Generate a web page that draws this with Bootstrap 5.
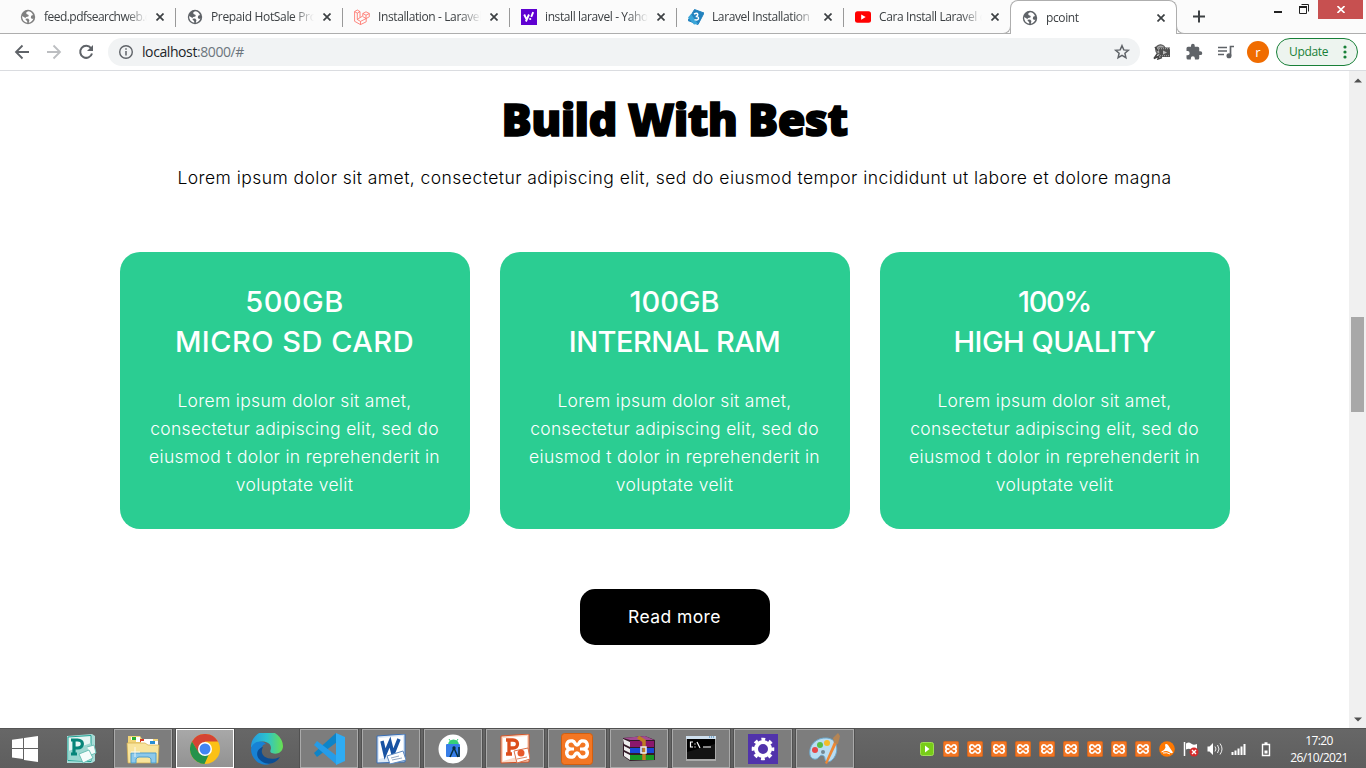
<!DOCTYPE html>
<html lang="en">
<head>
<meta charset="utf-8">
<title>pcoint</title>
<link rel="stylesheet" href="https://cdn.jsdelivr.net/npm/bootstrap@5.3.0/dist/css/bootstrap.min.css">
<style>
body{width:1366px;height:768px;overflow:hidden;font-family:"Open Sans","Noto Sans",sans-serif;font-size:12px;line-height:16px;color:#3c4043;background:#fff}
svg{display:block;flex:none}
.strip{height:34px;background:#fbfbfb;border-bottom:1px solid #aeaeae;padding-left:9px;flex:none}
.tab{width:167px;height:33px;padding:0 12px 0 11px;position:relative}
.tab:not(.on)::after{content:"";position:absolute;right:0;top:8px;width:1px;height:19px;background:#999}
.tab.last::after{display:none}
.tab .lbl{width:112px;margin-left:8px;margin-right:-3px;white-space:nowrap;letter-spacing:-.39px;-webkit-mask-image:linear-gradient(90deg,#000 82px,transparent 103px)}
.tab:nth-child(1) .lbl{letter-spacing:-.53px}
.tab:nth-child(2) .lbl{letter-spacing:-.35px}
.tab.on{height:34px;background:#fff;border:1px solid #aeaeae;border-bottom:0;border-radius:8px 8px 0 0;padding:0 11px;width:167px;margin-left:-1px;margin-right:1px}
.tab.on::before,.tab.on::after{content:"";position:absolute;bottom:0;width:8px;height:8px;border-bottom:1px solid #aeaeae;background:#fbfbfb}
.tab.on::before{left:-8px;border-right:1px solid #aeaeae;border-radius:0 0 8px 0}
.tab.on::after{right:-8px;border-left:1px solid #aeaeae;border-radius:0 0 0 8px}
.plus{margin:9px 0 0 14px}
.closewin{width:45px;height:19px;background:#c75050;margin:0 3px 0 0}
.bar{height:37px;border-bottom:1px solid #dadce0;flex:none;padding:0 8px 0 12px}
.omni{width:1032px;height:28px;background:#f1f3f4;border-radius:14px;margin-left:12px;padding:0 9px;font-size:14px}
.url{margin-left:7px;letter-spacing:-.41px}
.avatar{width:22px;height:22px;background:#f06c00;color:#fff;font-size:13px;margin-left:12px}
.upd{width:82px;height:28px;border:1px solid #188038;border-radius:14px;color:#188038;background:#edf4ef;padding:0 9px 0 12px;margin-left:7px;letter-spacing:-.35px}
.page{flex:1;min-height:0}
.site{width:1349px;font-family:Inter,"Liberation Sans",sans-serif;background:#fff}
.sbar{width:17px;background:#f0f0f0;padding:7px 0 6px}
.thumb{width:13px;height:95px;background:#a8a8a8;margin-top:234px}
.headline{font-family:"Noto Sans",Inter,sans-serif;font-weight:900;font-size:45px;line-height:56px;letter-spacing:-.7px;color:#000;-webkit-text-stroke:1.5px #000;padding-top:20px;margin:0}
.intro{font-weight:300;font-size:17.5px;line-height:28px;letter-spacing:.444px;color:#000;margin:17px 0 0}
.cards{width:1110px;gap:30px;margin:60px auto 0}
.feat{width:350px;height:277px;border-radius:20px;background:#2bcd92;color:#fff;padding-top:30px}
.feat h3{font-size:29px;line-height:40px;font-weight:500;margin:0 0 25px;white-space:nowrap}
.feat p{font-size:17.5px;line-height:28px;font-weight:300;letter-spacing:.31px;margin:0}
.wide{letter-spacing:.5px}.snug{letter-spacing:-.5px}.tight{letter-spacing:-1.3px}
.more{width:190px;height:56px;border-radius:15px;background:#000;color:#fff;margin-top:60px;font-size:17.5px;letter-spacing:.42px}
.task{height:40px;background:linear-gradient(#676767,#5e5e5e);flex:none;border-top:1px solid #555}
.start{width:26px;margin:0 14px 0 12px}
.tk{width:58px;height:39px;margin-right:4px;border:1px solid #aaa;background:#7d7d7d;outline:1px solid #515151}
.tk.cur{background:linear-gradient(#a8a8a8,#929292);border-color:#fff}
.tk.flat{background:none;border-color:transparent;outline:0}
.tray{margin-right:14px}
.tray>svg{margin-right:8px}
.clock{color:#fff;width:64px;line-height:17px;letter-spacing:-.6px;margin-right:15px}
</style>
</head>
<body class="d-flex flex-column">
<svg width="0" height="0" class="position-absolute">
<symbol id="globe" viewBox="0 0 16 16"><circle cx="8" cy="8" r="7.2" fill="currentColor"/><path d="M8 2.2 6.2 3.5l.3 1.6 2.2.8-.3 1.5-2.3.5-.8 1.3 2.8.4 1.3 1.5-.6 2.7c2-.5 4-2 4.6-4.2l-1.4.3-1.2-1.2.4-2 1.8-.8A5.8 5.8 0 0 0 8 2.2M2.2 7l3.200 2 .4 2 1.300 1 .2 1.700A5.800 5.800 0 0 1 2.200 7" fill="#fff"/></symbol>
<symbol id="x" viewBox="0 0 8 8"><path d="m.5.5 7 7m0-7-7 7" stroke="#3c4043" stroke-width="1.7"/></symbol>
<symbol id="xampp" viewBox="0 0 32 32"><rect x=".5" y=".5" width="31" height="31" rx="3" fill="#f37623" stroke="#d05f10"/><path d="M11.5 8C5 7 4 14 8.500 16 4 18 5 25 11.500 24c3-.500 2-4 4.500-4s1.500 3.500 4.500 4c6.500 1 7.500-6 3-8 4.500-2 3.500-9-3-8-3 .5-2 4-4.500 4s-1.500-3.500-4.500-4Z" fill="none" stroke="#fff" stroke-width="3.400"/><path d="M9 16h4m6 0h4" stroke="#fff" stroke-width="3.200"/></symbol>
</svg>

<!-- tab strip -->
<div class="strip d-flex align-items-start">
<div class="tab d-flex align-items-center"><svg width="16" height="16" style="color:#808080"><use href="#globe"/></svg><span class="lbl">feed.pdfsearchweb.c</span><svg class="ms-auto" width="8" height="8"><use href="#x"/></svg></div>
<div class="tab d-flex align-items-center"><svg width="16" height="16" style="color:#5f6368"><use href="#globe"/></svg><span class="lbl">Prepaid HotSale Pro</span><svg class="ms-auto" width="8" height="8"><use href="#x"/></svg></div>
<div class="tab d-flex align-items-center"><svg width="16" height="16" viewBox="0 0 16 16" fill="none" stroke="#ff6b61" stroke-width=".8"><path d="M.6 2.600 3.300 1 6 2.600v6L8.800 7V4.500L12 2.800l3.300 1.700v3.300L12.200 9.500v3.300L6.500 15.600.6 12.300zM.6 2.600l2.700 1.500L6 2.600M3.300 4.100v6.400M6 8.600l-2.700 1.900 3.200 1.900 5.700-2.900L8.800 7.600M8.800 4.500 12 6.200l3.300-1.700M12 6.200v3.300M6.500 12.400v3.200"/></svg><span class="lbl">Installation - Laravel</span><svg class="ms-auto" width="8" height="8"><use href="#x"/></svg></div>
<div class="tab d-flex align-items-center"><svg width="16" height="16" viewBox="0 0 16 16"><path fill="#5f01d1" d="M0 0h16v16H0z"/><path d="m3.200 5.500 2.100 4.400M8 5.500 4.900 12.500M12.200 3.200 10.200 7.800" stroke="#fff" stroke-width="1.900"/><circle cx="9.200" cy="10" r="1.100" fill="#fff"/></svg><span class="lbl">install laravel - Yaho</span><svg class="ms-auto" width="8" height="8"><use href="#x"/></svg></div>
<div class="tab d-flex align-items-center"><svg width="16" height="16" viewBox="0 0 16 16"><path d="M6.500.5 16 4 10 15.500 0 11.500z" fill="#2382be" stroke="#2382be" stroke-linejoin="round"/><path d="m0 8.500 6 7 4-.500L3 5z" fill="#3aa5d8"/><path d="M6 5.200q3-2 3.800 0Q10 7 7.800 7.700q3-.3 2.700 1.800-.7 2.300-4 1.200" fill="none" stroke="#fff" stroke-width="1.400"/></svg><span class="lbl">Laravel Installation</span><svg class="ms-auto" width="8" height="8"><use href="#x"/></svg></div>
<div class="tab last d-flex align-items-center"><svg width="16" height="16" viewBox="0 0 16 16"><rect y="2.300" width="16" height="11.500" rx="2.500" fill="red"/><path d="m6.200 5.500 4.500 2.600-4.500 2.600z" fill="#fff"/></svg><span class="lbl">Cara Install Laravel d</span><svg class="ms-auto" width="8" height="8"><use href="#x"/></svg></div>
<div class="tab on d-flex align-items-center"><svg width="16" height="16" style="color:#5f6368"><use href="#globe"/></svg><span class="lbl">pcoint</span><svg class="ms-auto" width="8" height="8"><use href="#x"/></svg></div>
<svg class="plus" width="14" height="14" viewBox="0 0 14 14"><path d="M7 1.500v12M1 7.500h12" stroke="#3c4043" stroke-width="2"/></svg>
<svg class="ms-auto" width="44" height="19" viewBox="0 0 44 19" fill="none" stroke="#222"><path d="M0 12h8" stroke-width="2"/><path d="M25.500 6.500h7v7h-7zM27.500 4.500h7v7"/><path d="M25 7h8" stroke-width="2"/></svg>
<div class="closewin d-flex align-items-center justify-content-center"><svg width="8" height="7" viewBox="0 0 8 7"><path d="m.5 0 7 7m0-7-7 7" stroke="#fff" stroke-width="1.600"/></svg></div>
</div>

<!-- toolbar -->
<div class="bar d-flex align-items-center">
<svg width="84" height="20" viewBox="0 0 84 20" fill="none" stroke-width="1.800"><path d="M17 10H4m6.500-6.500L4 10l6.500 6.500" stroke="#5f6368"/><path d="M35 10h13m-6.500-6.500L48 10l-6.500 6.500" stroke="#bcbec1"/><path d="M79 6.200A6 6 0 1 0 80 11.500" stroke="#5f6368" stroke-width="2"/><path d="M81 3v6h-6z" fill="#5f6368"/></svg>
<div class="omni d-flex align-items-center"><svg width="18" height="18" viewBox="0 0 18 18"><circle cx="9" cy="9" r="6.300" fill="none" stroke="#5f6368" stroke-width="1.400"/><path d="M9 8v4.500M9 5.300v1.500" stroke="#5f6368" stroke-width="1.500"/></svg><span class="url"><span class="text-dark">localhost</span><span class="text-secondary">:8000/#</span></span><svg class="ms-auto" width="18" height="18" viewBox="0 0 18 18"><path d="m9 2.700 1.800 4.200 4.500.4-3.400 3 1 4.400L9 12.400l-3.900 2.300 1-4.400-3.400-3 4.500-.4z" fill="none" stroke="#5f6368" stroke-width="1.500"/></svg></div>
<svg class="ms-auto" width="18" height="16" viewBox="0 0 18 16"><circle cx="7.500" cy="5.500" r="4.700" fill="#aaa" stroke="#555" stroke-width="1.300"/><path d="M5.500 3.500h11.500v9.500H7z" fill="#505050"/><path d="M6 4.700h11M7 11.700h10" stroke="#aaa" stroke-dasharray="1 1"/><path d="m10 6.500 4 2-4 2z" fill="#bbb"/><path d="M4.500 9.500 1 14.500l5-2.500-1 3 4-1.500M2 3l3 4" stroke="#444" stroke-width="1.500" fill="none"/></svg>
<svg style="margin-left:14px" width="18" height="18" viewBox="0 0 24 24"><path fill="#5f6368" d="M20.500 11H19V7a2 2 0 0 0-2-2h-4V3.500a2.500 2.500 0 0 0-5 0V5H4a2 2 0 0 0-2 2v3.800h1.500a2.700 2.700 0 0 1 0 5.400H2V20a2 2 0 0 0 2 2h3.800v-1.500a2.700 2.700 0 0 1 5.400 0V22H17a2 2 0 0 0 2-2v-4h1.500a2.500 2.500 0 0 0 0-5z"/></svg>
<svg style="margin-left:14px" width="18" height="16" viewBox="0 0 18 16" fill="none" stroke="#5f6368" stroke-width="1.700"><path d="M1 3.500h9M1 7h9M1 10.500h6M13.500 11.500v-9H17"/><circle cx="12" cy="11.700" r="1.700" fill="#5f6368"/></svg>
<div class="avatar rounded-circle d-flex align-items-center justify-content-center">r</div>
<div class="upd d-flex align-items-center"><span>Update</span><svg class="ms-auto" width="6" height="14" fill="#188038"><circle cx="3" cy="2" r="1.600"/><circle cx="3" cy="7" r="1.600"/><circle cx="3" cy="12" r="1.600"/></svg></div>
</div>

<!-- page -->
<div class="page d-flex">
<main class="site text-center">
<h2 class="headline">Build With Best</h2>
<p class="intro">Lorem ipsum dolor sit amet, consectetur adipiscing elit, sed do eiusmod tempor incididunt ut labore et dolore magna</p>
<div class="cards d-flex">
<div class="feat"><h3><span class="wide">500GB</span><br><span class="wide">MICRO SD CARD</span></h3><p>Lorem ipsum dolor sit amet,<br>consectetur adipiscing elit, sed do<br>eiusmod t dolor in reprehenderit in<br>voluptate velit</p></div>
<div class="feat"><h3>100GB<br><span class="snug">INTERNAL RAM</span></h3><p>Lorem ipsum dolor sit amet,<br>consectetur adipiscing elit, sed do<br>eiusmod t dolor in reprehenderit in<br>voluptate velit</p></div>
<div class="feat"><h3><span class="tight">100%</span><br><span class="snug">HIGH QUALITY</span></h3><p>Lorem ipsum dolor sit amet,<br>consectetur adipiscing elit, sed do<br>eiusmod t dolor in reprehenderit in<br>voluptate velit</p></div>
</div>
<button class="more border-0">Read more</button>
</main>
<div class="sbar d-flex flex-column align-items-center"><svg width="8" height="5"><path d="M0 4.500 4 .5l4 4z" fill="#505050"/></svg><div class="thumb"></div><svg class="mt-auto" width="8" height="5"><path d="M0 .5h8l-4 4z" fill="#505050"/></svg></div>
</div>

<!-- taskbar -->
<div class="task d-flex align-items-center">
<svg class="start" height="26" viewBox="0 0 26 26" fill="#fff"><path d="M0 3.700 11 2.200V12H0zM12 2l14-2v12H12zM0 13h11v10L0 21.500zM12 13h14v13l-14-2z"/></svg>
<div class="tk flat d-flex align-items-center justify-content-center"><svg width="32" height="32" viewBox="0 0 32 32"><path d="M2 3 27 1l3 2v25l-3 2H2z" fill="#a9dcd7"/><path d="M3 4 26 2.500v26L3 27.500z" fill="#e6f6f4" stroke="#20a395"/><path d="M3.500 18 26 10v18l-22.500-1z" fill="#9bd7d0"/><path d="M9 21V7h3.500c6.500 0 6.500 8 0 8H10M6 7h4M6 21h6" fill="none" stroke="#068579" stroke-width="3.200"/><path d="m14 21 10-4 4 8-10 5zM22 14l7-2 2 8-5 2" fill="#f4fcfb" stroke="#6cc0b6"/></svg></div>
<div class="tk d-flex align-items-center justify-content-center"><svg width="34" height="32" viewBox="0 0 34 32"><path d="M2 3h12l2 3h16v23H2z" fill="#f2d578"/><path d="M5 4h9v3H5z" fill="#fff"/><path d="M6 4h4v3H6z" fill="#2dac34"/><path d="M10 6h17v3H10z" fill="#fff"/><path d="M14 6h4v3h-4z" fill="#d63a22"/><path d="M15 8h17v4H15z" fill="#fff"/><path d="M24 8h5v3h-5z" fill="#288ed4"/><path d="M1 10h18l3 2h11l-1 18H2z" fill="#f8e49c" stroke="#d3ac4b" stroke-width=".7"/><path d="M5 30V20h25v10h-5v-4q-1-2-3-2h-9q-2 0-3 2v4z" fill="#8cc9ec" stroke="#4c9dcc"/><path d="M9 14v10M5 19h9" stroke="#fff" opacity=".8"/></svg></div>
<div class="tk cur d-flex align-items-center justify-content-center"><svg width="30" height="30" viewBox="0 0 30 30"><circle cx="15" cy="15" r="15" fill="#fbc116"/><path d="M2 7.500A15 15 0 0 1 28 7.500H15l-6.500 11.300z" fill="#d54434"/><path d="m2 7.500 7 11.500q5 4 10 1L14.500 30A15 15 0 0 1 2 7.500" fill="#25924b"/><circle cx="15" cy="15" r="7" fill="#fff"/><circle cx="15" cy="15" r="5.500" fill="#4285f4"/></svg></div>
<div class="tk flat d-flex align-items-center justify-content-center"><svg width="32" height="32" viewBox="0 0 32 32"><defs><linearGradient id="e1"><stop stop-color="#2499e0"/><stop offset=".5" stop-color="#2cc3cf"/><stop offset="1" stop-color="#69e14f"/></linearGradient></defs><path d="M0 15A16 16 0 0 1 32 13c0 7-7 9-11 7-3-1-1-3-1-5 0-8-15-9-20 0" fill="url(#e1)"/><path d="M0 16c1-7 10-10 15-5-6 0-8 13 4 20C9 34 0 26 0 16" fill="#1782d5"/><path d="M12 14c-5 9 6 15 17 10-5 8-15 9-21 2-4-5-1-11 4-12" fill="#0c4d94"/></svg></div>
<div class="tk d-flex align-items-center justify-content-center"><svg width="32" height="32" viewBox="0 0 32 32"><path d="M1 20 23 0l1 9L4 24z" fill="#0d84c8"/><path d="m1 12 3-4 20 15v9L1 12z" fill="#269ce8"/><path d="m23 0 9 4v24l-9 4z" fill="#2eacf4"/></svg></div>
<div class="tk d-flex align-items-center justify-content-center"><svg width="30" height="30" viewBox="0 0 30 30"><path d="M1 2 29 0v28L1 29z" fill="#dce9f7" stroke="#396fb7"/><path d="M3 4 27 2v17L3 25z" fill="#fff"/><path d="m6 7 3 13 5-12 3 12 6-15" fill="none" stroke="#1953a3" stroke-width="3.500"/><path d="m11 22 16-5 3 9-16 4z" fill="#fff" stroke="#608bc1"/><path d="m15 24 8-2m-7 4 10-2" stroke="#94a8c5"/></svg></div>
<div class="tk d-flex align-items-center justify-content-center"><svg width="30" height="30" viewBox="0 0 30 30"><circle cx="15" cy="15" r="14.500" fill="#fff"/><path d="M10 11a5.500 5.500 0 0 1 11 0z" fill="#35d078"/><path d="m11 5 2 3m7-3-2 3" stroke="#35d078"/><rect x="8" y="10" width="14" height="13" rx="1" fill="#377ee8"/><path d="m12 23 4-9 4 9" fill="none" stroke="#073042" stroke-width="1.500"/><circle cx="16" cy="14" r="1.700" fill="#073042"/><path d="M21 13v10" stroke="#073042" stroke-width="1.500"/></svg></div>
<div class="tk d-flex align-items-center justify-content-center"><svg width="30" height="30" viewBox="0 0 30 30"><path d="M1 2 29 0v28L1 29z" fill="#fbd9c7" stroke="#d45427"/><path d="M3 4 27 2v18L3 27z" fill="#fff"/><path d="M9 20V6h4c6 0 6 8 0 8h-3M6 6h4M6 20h6" fill="none" stroke="#dc4e1c" stroke-width="3.300"/><path d="m14 17 14-3 2 11-13 4z" fill="#fff" stroke="#db714a"/><circle cx="21" cy="19" r="3.500" fill="#e8592a"/><path d="m17 25 10-2" stroke="#e48b69"/></svg></div>
<div class="tk d-flex align-items-center justify-content-center"><svg width="32" height="32"><use href="#xampp"/></svg></div>
<div class="tk d-flex align-items-center justify-content-center"><svg width="32" height="26" viewBox="0 0 32 26"><path d="m0 2 22-2 10 4v20l-25 1-7-5z" fill="#331b28"/><path d="m0 2 22-2 9 4H7z" fill="#a34b91"/><path d="M7 5h24v6H7z" fill="#8b176c"/><path d="M7 12h24v5H7z" fill="#1848d8"/><path d="M7 19h24v5H7z" fill="#169a25"/><path d="m0 3 7 3v5L1 8m0 2 6 3v4l-6-3m0 2 6 3v5l-6-4" fill="#eee"/><path d="m15 1 6 4v19" fill="none" stroke="#bf7d24" stroke-width="3.500"/><path d="M18 11h5v6h-5z" fill="none" stroke="#eee" stroke-width="1.500"/></svg></div>
<div class="tk d-flex align-items-center justify-content-center"><svg width="30" height="25" viewBox="0 0 30 25"><path d="M0 0h30v25H0z" fill="#aaa"/><path d="M0 0h30v3H0z" fill="#cfe0ee"/><path d="M1 3h28v20H1z" fill="#000"/><path d="M23 1h5" stroke="#357ab7" stroke-dasharray="1 1"/><path d="M7 6H4.500v5H7M9 7.500v1m0 2v1M11 6l3 6m3-1h8" stroke="#fff" stroke-width="1.200" fill="none"/><path d="M1 16 29 8v15H1z" fill="#fff" opacity=".08"/></svg></div>
<div class="tk d-flex align-items-center justify-content-center"><svg width="30" height="30" viewBox="0 0 30 30"><path d="M0 0h30v30H0z" fill="#5133ab"/><circle cx="15" cy="15" r="7" fill="none" stroke="#fff" stroke-width="4"/><circle cx="15" cy="15" r="9.700" fill="none" stroke="#fff" stroke-width="3.200" stroke-dasharray="3.800 3.820" stroke-dashoffset="1.900"/></svg></div>
<div class="tk d-flex align-items-center justify-content-center"><svg width="32" height="32" viewBox="0 0 32 32"><path d="M1 22C-1 12 8 4 18 5c12 1 12 16 5 22-3 3-7 2-7-1 0-4-4-5-6-2-3 4-8 2-9-2" fill="#b9ddf2" stroke="#6ca9ce"/><circle cx="6" cy="17" r="3" fill="#e54747"/><circle cx="11" cy="12" r="3" fill="#59bd47"/><circle cx="18" cy="10" r="3" fill="#f5bc28"/><circle cx="14" cy="19" r="2" fill="#738894"/><path d="m25 9 3 1-10 21-2-1z" fill="#ed8836"/><path d="m25 10-1-5 5-5 2 3-2 8z" fill="#b58555"/></svg></div>
<div class="tray d-flex align-items-center ms-auto">
<svg width="16" height="16" viewBox="0 0 16 16"><rect x="1.500" y="1.500" width="13" height="13" rx="2" fill="#78cc18" stroke="#a0df53"/><path d="m6 4.500 4.500 3.500L6 11.500z" fill="#fff"/></svg>
<svg width="16" height="16"><use href="#xampp"/></svg><svg width="16" height="16"><use href="#xampp"/></svg><svg width="16" height="16"><use href="#xampp"/></svg><svg width="16" height="16"><use href="#xampp"/></svg><svg width="16" height="16"><use href="#xampp"/></svg><svg width="16" height="16"><use href="#xampp"/></svg><svg width="16" height="16"><use href="#xampp"/></svg><svg width="16" height="16"><use href="#xampp"/></svg><svg width="16" height="16"><use href="#xampp"/></svg>
<svg width="16" height="16" viewBox="0 0 16 16"><circle cx="8" cy="8" r="7.800" fill="#ff7800"/><path d="M6 3.500c1-1 2-.5 3 .5l5 7.500q-2 1.500-4-.5-3-2-7 .5-1 0-.5-1 3-1 4-4z" fill="#fff"/><path d="M4 12q4-1 7 1" fill="none" stroke="#fff"/></svg>
<svg width="16" height="16" viewBox="0 0 16 16"><path d="M1.500 1v14" stroke="#fff" stroke-width="1.500"/><path d="M3 2.500q3-2 5 0t6 .5v6q-4 1-6-.5t-5 0z" fill="#fff"/><circle cx="11" cy="11" r="4.500" fill="#d52b2b"/><path d="m9 9 4 4m0-4-4 4" stroke="#fff" stroke-width="1.400"/></svg>
<svg width="16" height="16" viewBox="0 0 16 16"><path d="M.5 5.500h2L6 2v12l-3.500-3.500h-2z" fill="#fff"/><path d="M8 5.500q2 2.500 0 5M10.500 4q3 4 0 8M13 2.500q4 5.500 0 11" fill="none" stroke="#eee"/></svg>
<svg width="16" height="16" viewBox="0 0 16 16" stroke="#fff" stroke-width="2"><path d="M1.500 11v3M4.500 9.500V14M7.500 7.500V14M10.500 5.500V14M13.500 3v11"/></svg>
<svg class="ms-1 me-0" width="14" height="16" viewBox="0 0 14 16" fill="none" stroke="#fff"><path d="M3.500 3.500h7v11h-7zM5.500 2h3" stroke-width="1.400"/><path d="M5.500 9.500h3v3h-3z" fill="#fff" stroke="none"/></svg>
</div>
<div class="clock text-center">17:20<br>26/10/2021</div>
</div>
<script src="https://cdn.jsdelivr.net/npm/bootstrap@5.3.0/dist/js/bootstrap.bundle.min.js"></script>
</body>
</html>
